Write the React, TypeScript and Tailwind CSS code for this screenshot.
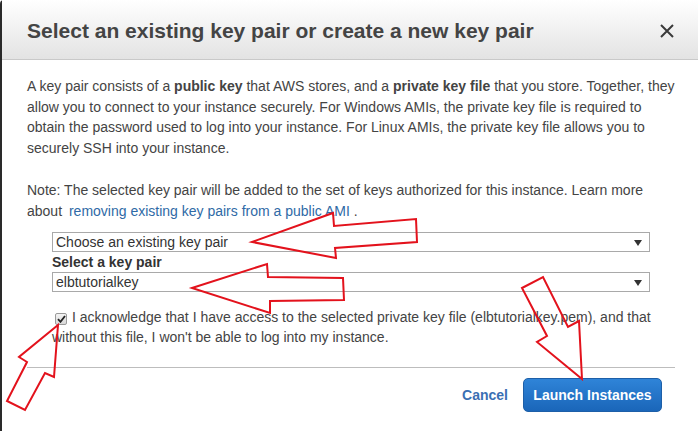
import React from "react";

const Caret = () => (
  <svg width="8" height="6" viewBox="0 0 8 6" className="absolute right-[7px] top-[7px]">
    <polygon points="0,0 8,0 4,6" fill="#333" />
  </svg>
);

export default function App() {
  return (
    <div
      className="relative w-[698px] h-[431px] overflow-hidden bg-white text-[#444]"
      style={{ fontFamily: '"Liberation Sans", Arial, sans-serif' }}
    >
      <div className="h-full border-l-2 border-[#2a2a2a] rounded-tl-[4px] flex flex-col">
        {/* Header */}
        <div className="h-[60px] flex items-center justify-between pl-[25px] pr-[24px] bg-gradient-to-b from-white to-[#e3e3e3] border-b border-[#c9c9c9]">
          <div className="text-[21px] font-bold text-[#444] leading-none pt-[2px]">
            Select an existing key pair or create a new key pair
          </div>
          <svg width="14" height="14" viewBox="0 0 14 14" className="mt-[2px]">
            <path d="M1 1 L13 13 M13 1 L1 13" stroke="#3a3a3a" strokeWidth="2" />
          </svg>
        </div>

        {/* Body */}
        <div className="pl-[25px] pt-[16px] text-[14px] leading-[20.5px] whitespace-nowrap">
          <p>
            A key pair consists of a <b>public key</b> that AWS stores, and a <b>private key file</b> that you store. Together, they
            <br />
            allow you to connect to your instance securely. For Windows AMIs, the private key file is required to
            <br />
            obtain the password used to log into your instance. For Linux AMIs, the private key file allows you to
            <br />
            securely SSH into your instance.
          </p>
          <p className="mt-[22px]">
            Note: The selected key pair will be added to the set of keys authorized for this instance. Learn more
            <br />
            about <span className="ml-[3px] text-[#2f6aa6]">removing existing key pairs from a public AMI</span> .
          </p>

          <div className="ml-[25px] w-[598px] mt-[11px]">
            <div className="relative h-[20px] border border-[#a9a9a9] bg-white pl-[3px] leading-[18px] text-[#333]">
              Choose an existing key pair
              <Caret />
            </div>
            <div className="font-bold text-[#333] leading-[19px] mt-[1px]">Select a key pair</div>
            <div className="relative h-[20px] border border-[#a9a9a9] bg-white pl-[3px] leading-[18px] text-[#333]">
              elbtutorialkey
              <Caret />
            </div>
            <div className="mt-[15px] leading-[20px]">
              <span className="inline-flex items-center justify-center w-[12px] h-[12px] ml-[3px] mr-[5px] align-[-1px] border border-[#9a9a9a] bg-gradient-to-b from-[#f4f4f4] to-[#d8d8d8] rounded-[2px]">
                <svg width="9" height="8" viewBox="0 0 9 8">
                  <path d="M1 4.2 L3.5 6.8 L8 1" stroke="#222" strokeWidth="1.8" fill="none" />
                </svg>
              </span>
              I acknowledge that I have access to the selected private key file (elbtutorialkey.pem), and that
              <br />
              without this file, I won't be able to log into my instance.
            </div>
          </div>
        </div>

        {/* Footer */}
        <div className="mt-[20px] ml-[25px] w-[648px] border-t border-[#bdbdbd]" />
        <div className="flex items-center justify-end pr-[36px] pt-[10px] gap-[15px]">
          <span className="text-[14px] font-bold text-[#3a6fb3]">Cancel</span>
          <div className="h-[34px] w-[139px] flex items-center justify-center rounded-[5px] border border-[#1d5fa8] bg-gradient-to-b from-[#2f84d8] to-[#1a66b9] text-white text-[14px] font-bold">
            Launch Instances
          </div>
        </div>
      </div>

      {/* Annotation arrows */}
      <svg className="absolute inset-0 pointer-events-none" width="698" height="431" viewBox="0 0 698 431">
        <g fill="none" stroke="#e3121c" strokeWidth="2" strokeLinejoin="miter">
          <polygon points="252,242 333,213 334,226 416,219 417,242 335,248 336,258" />
          <polygon points="192,288 267,264 268,277 343,278 344,300 270,301 270,313" />
          <polygon points="522,288 543,277 568,327 579,321 582,379 537,342 547,336" />
          <polygon points="58,325 19,357 27,362 7,401 25,410 45,373 54,377" />
        </g>
      </svg>
    </div>
  );
}
